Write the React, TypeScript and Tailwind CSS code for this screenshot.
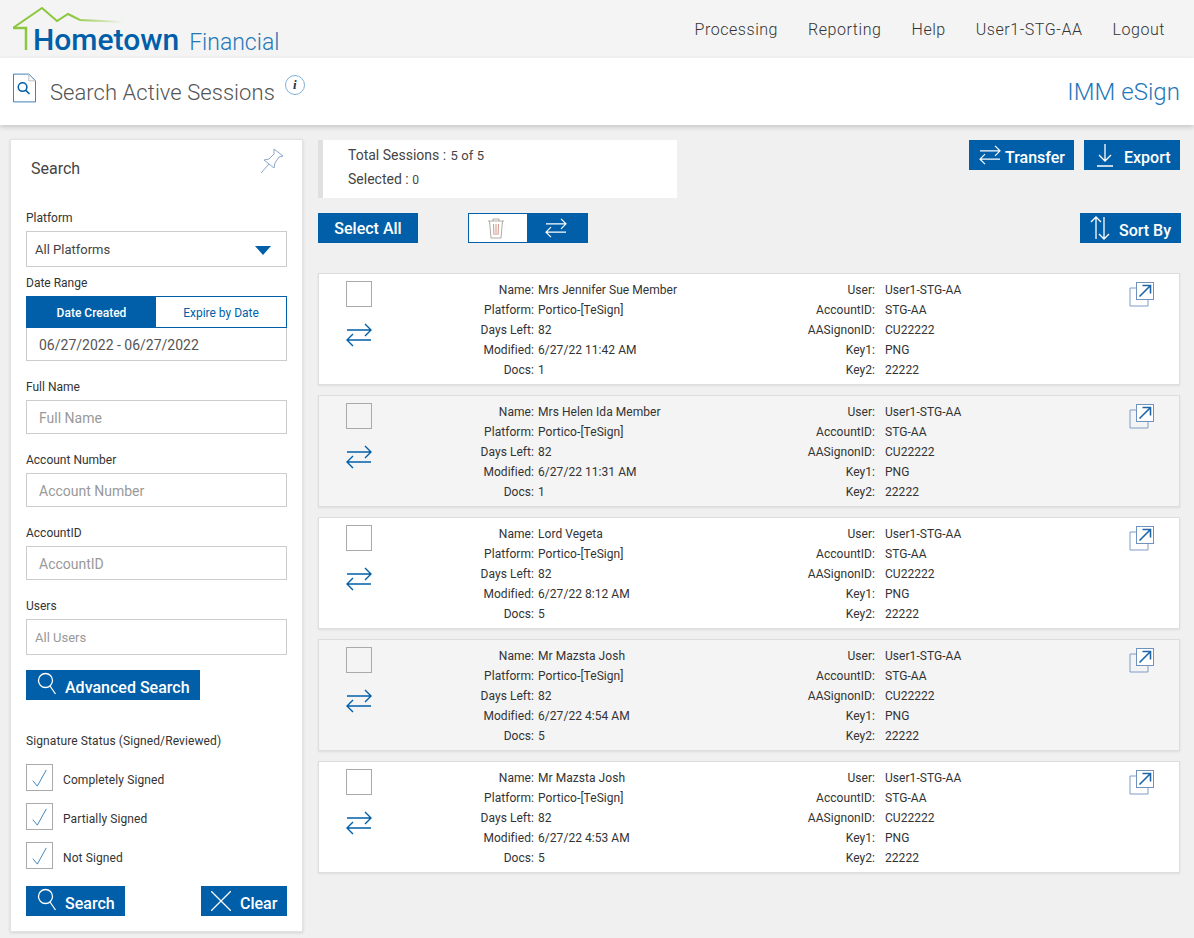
import React from "react";

const sessions = [
  { name: "Mrs Jennifer Sue Member", modified: "6/27/22 11:42 AM", docs: "1" },
  { name: "Mrs Helen Ida Member", modified: "6/27/22 11:31 AM", docs: "1" },
  { name: "Lord Vegeta", modified: "6/27/22 8:12 AM", docs: "5" },
  { name: "Mr Mazsta Josh", modified: "6/27/22 4:54 AM", docs: "5" },
  { name: "Mr Mazsta Josh", modified: "6/27/22 4:53 AM", docs: "5" },
];

function TransferIcon({ className }: { className?: string }) {
  return (
    <svg viewBox="0 0 26 24" fill="none" stroke="currentColor" strokeWidth="1.4" className={className}>
      <path d="M1 7h24M19 1l6 6-6 6M25 17H1M7 11l-6 6 6 6" />
    </svg>
  );
}

function SearchIcon() {
  return (
    <svg viewBox="0 0 20 26" fill="none" stroke="currentColor" strokeWidth="1.3" className="h-[26px] w-[20px]">
      <circle cx="8.5" cy="8.5" r="7" />
      <path d="M13 14l5.5 8" />
    </svg>
  );
}

function Button({ children, className }: { children: React.ReactNode; className: string }) {
  return (
    <button type="button" className={`flex h-[30px] items-center bg-[#005fa8] text-[16px] font-medium text-white ${className}`}>
      {children}
    </button>
  );
}

function Field({ label, placeholder, users }: { label: string; placeholder: string; users?: boolean }) {
  return (
    <div>
      <div className="h-[14px] text-[12px] leading-[16px] text-[#333]">{label}</div>
      <div className={`mt-[7px] flex items-center border border-[#ccc] pt-[2px] text-[#999] ${users ? "h-[36px] pl-2 text-[13px]" : "h-[34px] pl-3 text-[14px]"}`}>
        {placeholder}
      </div>
    </div>
  );
}

function CheckRow({ label }: { label: string }) {
  return (
    <div className="flex h-[27px] items-center">
      <div className="flex h-[27px] w-[27px] items-center justify-center border border-[#aaa]">
        <svg viewBox="0 0 20 22" fill="none" stroke="#2f78b7" strokeWidth="1" className="h-[20px] w-[18px]">
          <path d="M2 14l5 6L17 2" />
        </svg>
      </div>
      <span className="ml-[10px] pt-[4px] text-[12px] tracking-[0.1px] text-[#333]">{label}</span>
    </div>
  );
}

function InfoRows({ rows, labelWidth }: { rows: [string, string][]; labelWidth: string }) {
  return (
    <div className="flex flex-col">
      {rows.map(([label, value]) => (
        <div key={label} className="flex h-[20px] items-center text-[12px] tracking-[0.05px] text-[#333]">
          <span className={`shrink-0 text-right ${labelWidth}`}>{label}:</span>
          <span className="ml-[4px] whitespace-nowrap">{value}</span>
        </div>
      ))}
    </div>
  );
}

function SessionCard({ session, shaded }: { session: (typeof sessions)[number]; shaded: boolean }) {
  return (
    <div className={`flex h-[112px] border border-[#ddd] pl-[27px] pr-[24px] pt-[6px] shadow-[0_1px_2px_rgba(0,0,0,0.08)] ${shaded ? "bg-[#f4f4f4]" : "bg-white"}`}>
      <div className="w-[100px] shrink-0 pt-[1px]">
        <div className="h-[26px] w-[26px] border border-[#aaa]" />
        <TransferIcon className="mt-[16px] h-[24px] w-[26px] text-[#005fa8]" />
      </div>
      <div className="w-[361px] shrink-0 pl-[12px]">
        <InfoRows
          labelWidth="w-[76px]"
          rows={[
            ["Name", session.name],
            ["Platform", "Portico-[TeSign]"],
            ["Days Left", "82"],
            ["Modified", session.modified],
            ["Docs", session.docs],
          ]}
        />
      </div>
      <div className="flex-1">
        <InfoRows
          labelWidth="w-[68px] mr-[6px]"
          rows={[
            ["User", "User1-STG-AA"],
            ["AccountID", "STG-AA"],
            ["AASignonID", "CU22222"],
            ["Key1", "PNG"],
            ["Key2", "22222"],
          ]}
        />
      </div>
      <svg viewBox="0 0 26 26" fill="none" className="mt-[1px] h-[26px] w-[26px] shrink-0">
        <path d="M7 7H1v18h18v-6" stroke="#7f9cc4" strokeWidth="1" />
        <rect x="7.5" y="1.5" width="17" height="17" fill="#fff" stroke="#6f92bf" />
        <path d="M10.5 15.5l11-11M13.5 4.5h8v8" stroke="#1f66a8" strokeWidth="1.6" />
      </svg>
    </div>
  );
}

export default function App() {
  return (
    <div className="min-h-[938px] bg-[#f0f0f0] font-['Roboto',sans-serif]">
      <header className="flex h-[58px] items-start justify-between bg-[#f4f4f4]">
        <div className="relative ml-[13px] h-[58px] w-[270px]">
          <svg viewBox="0 0 130 45" fill="none" className="absolute left-0 top-[7px] h-[45px] w-[130px]">
            <defs>
              <linearGradient id="roof" x1="0" x2="1" y1="0" y2="0">
                <stop offset="0.55" stopColor="#8dc63f" />
                <stop offset="1" stopColor="#8dc63f" stopOpacity="0" />
              </linearGradient>
            </defs>
            <path d="M0 21L29 1l15 13 11-7 12 6 43 2" stroke="url(#roof)" strokeWidth="2" />
            <path d="M0 21h13v22" stroke="#8dc63f" strokeWidth="2.5" />
          </svg>
          <div className="absolute left-[20px] top-[23px] flex items-baseline whitespace-nowrap text-[#005fa8]">
            <span className="text-[30px] font-medium leading-[34px]">Hometown</span>
            <span className="ml-[10px] text-[23px] font-light leading-[34px] text-[#1f77b8]">Financial</span>
          </div>
        </div>
        <nav className="mr-[29px] mt-[20px] flex gap-[30px] text-[16px] font-light leading-[20px] tracking-[0.55px] text-[#333]">
          <span>Processing</span>
          <span>Reporting</span>
          <span>Help</span>
          <span>User1-STG-AA</span>
          <span>Logout</span>
        </nav>
      </header>

      <div className="flex h-[67px] items-start justify-between bg-white pl-[13px] pr-[14px] shadow-[0_2px_5px_rgba(0,0,0,0.18)]">
        <div className="flex items-start">
          <svg viewBox="0 0 24 30" fill="none" className="mt-[15px] h-[30px] w-[23px]">
            <path d="M.5.5h16l7 7v22H.5z" stroke="#3b78b5" />
            <path d="M16.5.5v7h7" stroke="#bbb" />
            <circle cx="10" cy="14" r="4.5" stroke="#005fa8" strokeWidth="1.6" />
            <path d="M13.2 17.2l4 4" stroke="#005fa8" strokeWidth="1.6" />
          </svg>
          <div className="ml-[14px] mt-[20px] text-[22px] font-light leading-[30px] tracking-[0.05px] text-[#555]">Search Active Sessions</div>
          <div className="ml-[10px] mt-[17px] flex h-[20px] w-[20px] items-center justify-center rounded-full border border-[#7fb0d8] font-['Liberation_Serif',serif] text-[13px] font-bold italic text-[#234]">
            i
          </div>
        </div>
        <div className="mt-[18px] text-[24px] font-light leading-[32px] tracking-[0.05px] text-[#1f77b8]">IMM eSign</div>
      </div>

      <div className="flex items-start pl-[10px] pr-[13px] pt-[14px]">
        <aside className="relative h-[793px] w-[293px] shrink-0 border border-[#e2e2e2] bg-white pl-[15px] pr-[15px] shadow-[0_1px_3px_rgba(0,0,0,0.12)]">
          <svg viewBox="0 0 24 26" fill="none" stroke="#7f9cc4" strokeWidth="0.9" className="absolute right-[18px] top-[8px] h-[26px] w-[24px]">
            <path d="M1 25l8-9M14 1l9 7-4 1-4 6-1 5L4 12l5-1 5-5z" />
          </svg>
          <div className="ml-[5px] mt-[19px] text-[16px] leading-[20px] text-[#444]">Search</div>

          <div className="mt-[31px] h-[14px] text-[12px] leading-[16px] text-[#333]">Platform</div>
          <div className="mt-[7px] flex h-[36px] items-center justify-between border border-[#ccc] pl-2 pr-[15px] pt-[2px] text-[13px] text-[#444]">
            All Platforms
            <svg viewBox="0 0 16 9" className="h-[9px] w-[16px]">
              <path d="M0 0h16L8 9z" fill="#005fa8" />
            </svg>
          </div>

          <div className="mt-[9px] h-[14px] text-[12px] leading-[14px] text-[#333]">Date Range</div>
          <div className="mt-[6px] flex h-[32px] border border-[#005fa8] text-[12px]">
            <div className="flex w-[129px] items-center justify-center bg-[#005fa8] pt-[2px] font-medium text-white">Date Created</div>
            <div className="flex flex-1 items-center justify-center pt-[2px] text-[#005fa8]">Expire by Date</div>
          </div>
          <div className="flex h-[33px] items-center border border-t-0 border-[#ccc] pl-3 pt-[3px] text-[14px] text-[#555]">
            06/27/2022 - 06/27/2022
          </div>

          <div className="mt-[18px] flex flex-col gap-[18px]">
            <Field label="Full Name" placeholder="Full Name" />
            <Field label="Account Number" placeholder="Account Number" />
            <Field label="AccountID" placeholder="AccountID" />
            <Field label="Users" placeholder="All Users" users />
          </div>

          <Button className="mt-[15px] w-[174px] pl-[11px]">
            <SearchIcon />
            <span className="ml-[8px] pt-[5px]">Advanced Search</span>
          </Button>

          <div className="mt-[34px] h-[14px] text-[12px] leading-[14px] tracking-[0.1px] text-[#333]">Signature Status (Signed/Reviewed)</div>
          <div className="mt-[16px] flex flex-col gap-[12px]">
            <CheckRow label="Completely Signed" />
            <CheckRow label="Partially Signed" />
            <CheckRow label="Not Signed" />
          </div>

          <div className="mt-[17px] flex justify-between">
            <Button className="w-[99px] pl-[11px]">
              <SearchIcon />
              <span className="ml-[8px] pt-[5px]">Search</span>
            </Button>
            <Button className="w-[86px] pl-[10px]">
              <svg viewBox="0 0 20 20" fill="none" stroke="currentColor" strokeWidth="1.3" className="h-[20px] w-[20px]">
                <path d="M0 0l20 20M20 0L0 20" />
              </svg>
              <span className="ml-[9px] pt-[5px]">Clear</span>
            </Button>
          </div>
        </aside>

        <main className="ml-[15px] mt-[1px] min-w-0 flex-1">
          <div className="flex items-start justify-between pr-[1px]">
            <div className="h-[58px] w-[359px] border-l-[5px] border-[#e0e0e0] bg-white pl-[25px] pt-[3px] text-[14px] leading-[24px] text-[#444]">
              <div className="h-[24px]">
                Total Sessions : <span className="ml-[1px] text-[13px] tracking-[0.1px]">5 of 5</span>
              </div>
              <div>
                Selected : <span className="text-[12px]">0</span>
              </div>
            </div>
            <div className="flex gap-[10px]">
              <Button className="w-[105px] pl-[10px]">
                <TransferIcon className="h-[20px] w-[22px]" />
                <span className="ml-[4px] pt-[5px]">Transfer</span>
              </Button>
              <Button className="w-[96px] pl-[13px]">
                <svg viewBox="0 0 16 24" fill="none" stroke="currentColor" strokeWidth="1.3" className="h-[24px] w-[16px]">
                  <path d="M8 1v17M2 12l6 6 6-6M0 23h16" />
                </svg>
                <span className="ml-[11px] pt-[5px]">Export</span>
              </Button>
            </div>
          </div>

          <div className="mt-[15px] flex items-start">
            <Button className="w-[100px] justify-center pt-[1px]">Select All</Button>
            <div className="ml-[50px] flex h-[30px] w-[120px] border border-[#005fa8]">
              <div className="flex w-[58px] items-center justify-center bg-white pr-[5px]">
                <svg viewBox="0 0 18 22" fill="none" strokeWidth="0.9" className="h-[22px] w-[18px]">
                  <path d="M1 4h16M6 4V2h6v2M2.5 4l1.5 17h10l1.5-17" stroke="#a9a29c" />
                  <path d="M6.5 7l.5 11M9 7v11M11.5 7l-.5 11" stroke="#c98a7c" />
                </svg>
              </div>
              <div className="flex flex-1 items-center justify-center bg-[#005fa8] pr-[3px] text-white">
                <TransferIcon className="h-[20px] w-[22px]" />
              </div>
            </div>
            <Button className="ml-auto w-[101px] pl-[10px]">
              <svg viewBox="0 0 20 24" fill="none" stroke="currentColor" strokeWidth="1.3" className="h-[24px] w-[20px]">
                <path d="M6 23V1M1 6l5-5 5 5M14 1v22M9 18l5 5 5-5" />
              </svg>
              <span className="ml-[9px] pt-[5px]">Sort By</span>
            </Button>
          </div>

          <div className="mt-[30px] flex flex-col gap-[10px] pr-[1px]">
            {sessions.map((s, i) => (
              <SessionCard key={i} session={s} shaded={i % 2 === 1} />
            ))}
          </div>
        </main>
      </div>
    </div>
  );
}
